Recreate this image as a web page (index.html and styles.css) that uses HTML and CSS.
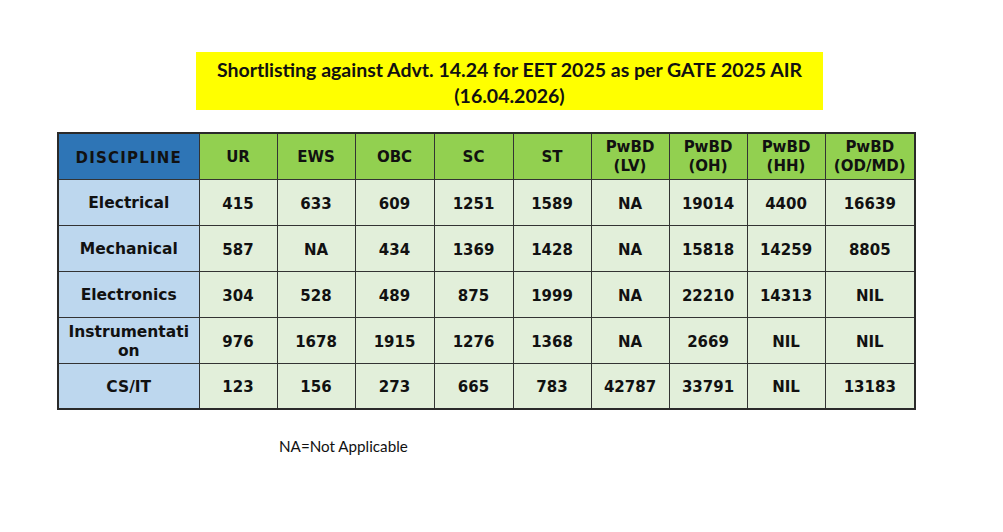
FILE: index.html
```html
<!DOCTYPE html>
<html>
<head>
<meta charset="utf-8">
<link rel="stylesheet" href="styles.css">
</head>
<body>
<div class="page">
  <div class="title">Shortlisting against Advt. 14.24 for EET 2025 as per GATE 2025 AIR<br>(16.04.2026)</div>
  <table class="grid">
    <colgroup>
      <col class="c-disc"><col class="c-n"><col class="c-n"><col class="c-w"><col class="c-w"><col class="c-n"><col class="c-n"><col class="c-n"><col class="c-n"><col class="c-last">
    </colgroup>
    <thead>
      <tr>
        <th class="hdisc">DISCIPLINE</th>
        <th>UR</th><th>EWS</th><th>OBC</th><th>SC</th><th>ST</th>
        <th class="two">PwBD<br>(LV)</th><th class="two">PwBD<br>(OH)</th><th class="two">PwBD<br>(HH)</th><th class="two">PwBD<br>(OD/MD)</th>
      </tr>
    </thead>
    <tbody>
      <tr><th class="disc">Electrical</th><td>415</td><td>633</td><td>609</td><td>1251</td><td>1589</td><td>NA</td><td>19014</td><td>4400</td><td>16639</td></tr>
      <tr><th class="disc">Mechanical</th><td>587</td><td>NA</td><td>434</td><td>1369</td><td>1428</td><td>NA</td><td>15818</td><td>14259</td><td>8805</td></tr>
      <tr><th class="disc">Electronics</th><td>304</td><td>528</td><td>489</td><td>875</td><td>1999</td><td>NA</td><td>22210</td><td>14313</td><td>NIL</td></tr>
      <tr><th class="disc">Instrumentati<wbr>on</th><td>976</td><td>1678</td><td>1915</td><td>1276</td><td>1368</td><td>NA</td><td>2669</td><td>NIL</td><td>NIL</td></tr>
      <tr><th class="disc">CS/IT</th><td>123</td><td>156</td><td>273</td><td>665</td><td>783</td><td>42787</td><td>33791</td><td>NIL</td><td>13183</td></tr>
    </tbody>
  </table>
  <p class="note">NA=Not Applicable</p>
</div>
</body>
</html>
```

FILE: styles.css
```css
html, body {
  margin: 0;
  padding: 0;
  background: #ffffff;
}

.page {
  padding-top: 52px;
  display: flex;
  flex-direction: column;
  align-items: flex-start;
}

.title {
  margin-left: 196px;
  width: 627px;
  height: 58px;
  box-sizing: border-box;
  background: #ffff00;
  text-align: center;
  font-family: Lato, "Liberation Sans", sans-serif;
  font-weight: bold;
  font-size: 19.5px;
  line-height: 26px;
  padding-top: 5px;
  color: #111;
}

.grid {
  margin-left: 57px;
  margin-top: 22px;
  width: 858px;
  table-layout: fixed;
  border-collapse: collapse;
  border: 2px solid #2a2a2a;
  font-family: "DejaVu Sans", Verdana, sans-serif;
  font-weight: bold;
  font-size: 15px;
  color: #111;
}

.c-disc { width: 141px; }
.c-n { width: 78px; }
.c-w { width: 79px; }
.c-last { width: 90px; }

.grid th,
.grid td {
  border: 1px solid #333;
  text-align: center;
  vertical-align: middle;
  padding: 3px 1px 0;
  height: 45px;
  box-sizing: border-box;
}

.grid thead th {
  background: #92d050;
  height: 46px;
  padding-top: 1px;
}

.grid thead th.hdisc {
  background: #2e75b6;
  letter-spacing: 1.2px;
  padding-top: 3px;
}

.grid thead th.two {
  line-height: 19px;
}

.grid th.disc {
  background: #bdd7ee;
  line-height: 19px;
  font-size: 15.5px;
}

.grid td {
  background: #e2efda;
  height: 46px;
}

.note {
  margin: 27px 0 0 279px;
  font-family: Lato, "Liberation Sans", sans-serif;
  font-size: 15.2px;
  color: #111;
}
```
